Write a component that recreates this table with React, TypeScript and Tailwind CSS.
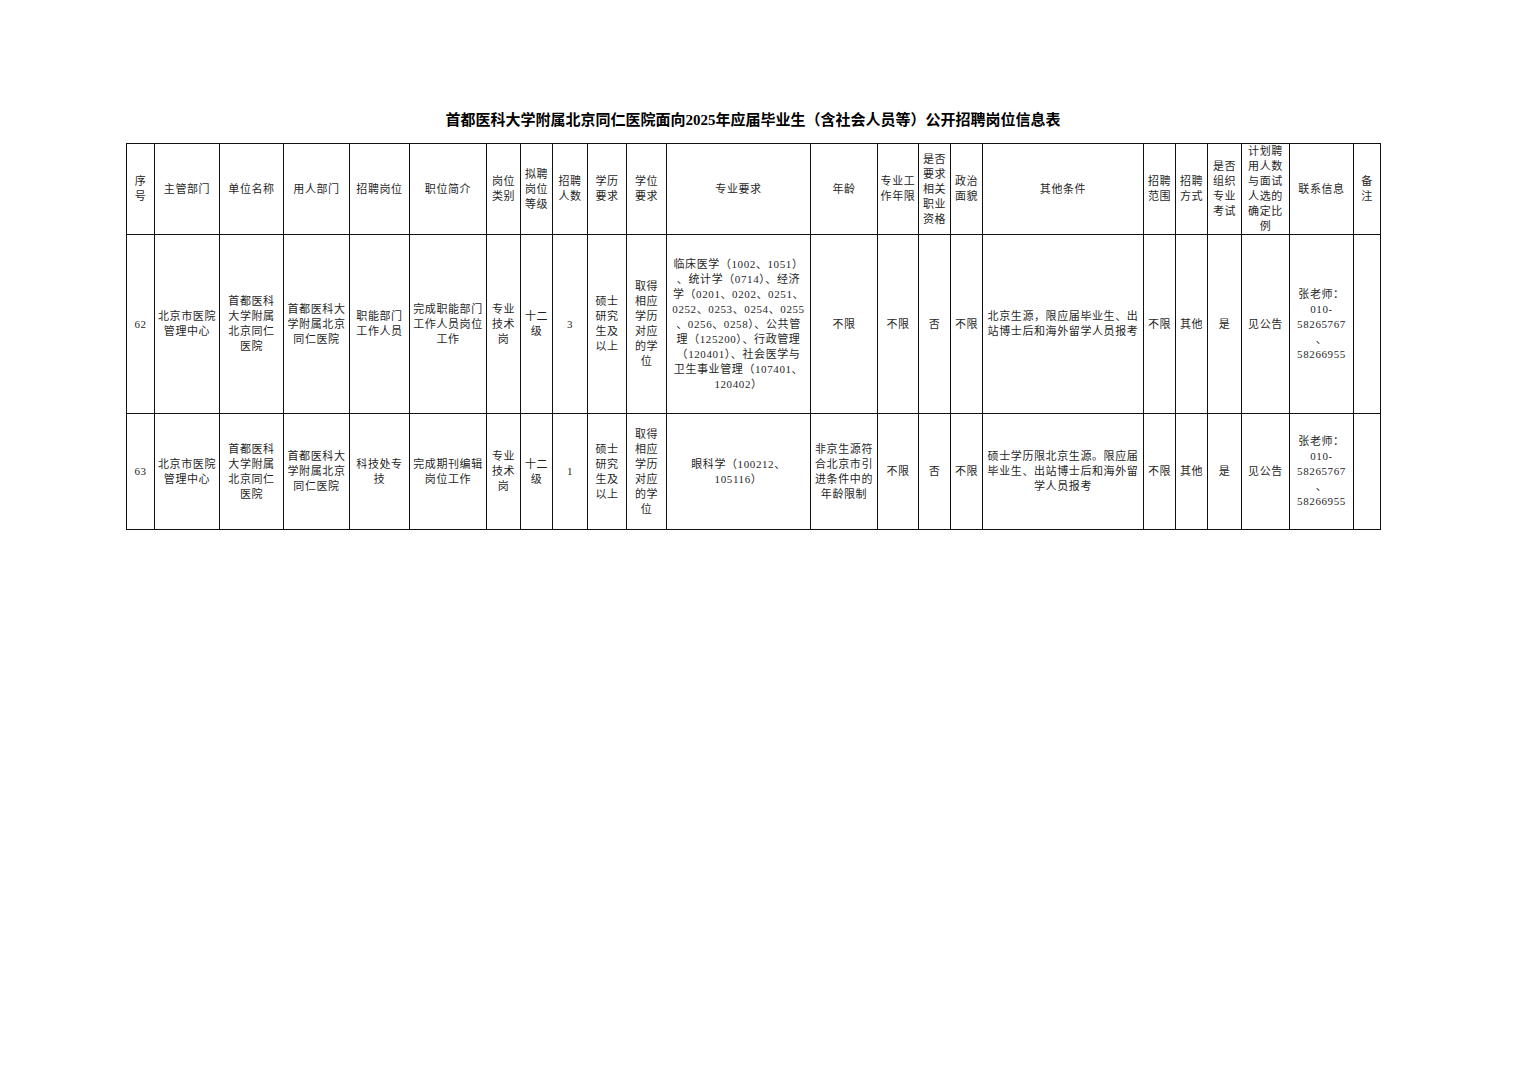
import React from "react";

const widths = [28, 65, 64, 66, 60, 77, 34, 32, 35, 39, 40, 144, 67, 41, 32, 32, 161, 32, 32, 34, 48, 64, 27];

const header: string[][] = [
  ["序", "号"],
  ["主管部门"],
  ["单位名称"],
  ["用人部门"],
  ["招聘岗位"],
  ["职位简介"],
  ["岗位", "类别"],
  ["拟聘", "岗位", "等级"],
  ["招聘", "人数"],
  ["学历", "要求"],
  ["学位", "要求"],
  ["专业要求"],
  ["年龄"],
  ["专业工", "作年限"],
  ["是否", "要求", "相关", "职业", "资格"],
  ["政治", "面貌"],
  ["其他条件"],
  ["招聘", "范围"],
  ["招聘", "方式"],
  ["是否", "组织", "专业", "考试"],
  ["计划聘", "用人数", "与面试", "人选的", "确定比", "例"],
  ["联系信息"],
  ["备", "注"],
];

const contact = ["张老师：", "010-", "58265767", "、", "58266955"];
const unit = ["首都医科", "大学附属", "北京同仁", "医院"];
const dept = ["首都医科大", "学附属北京", "同仁医院"];
const degree = ["取得", "相应", "学历", "对应", "的学", "位"];
const edu = ["硕士", "研究", "生及", "以上"];

const rows: { h: string; cells: string[][] }[] = [
  {
    h: "h-[179px]",
    cells: [
      ["62"],
      ["北京市医院", "管理中心"],
      unit,
      dept,
      ["职能部门", "工作人员"],
      ["完成职能部门", "工作人员岗位", "工作"],
      ["专业", "技术", "岗"],
      ["十二", "级"],
      ["3"],
      edu,
      degree,
      [
        "临床医学（1002、1051）",
        "、统计学（0714）、经济",
        "学（0201、0202、0251、",
        "0252、0253、0254、0255",
        "、0256、0258）、公共管",
        "理（125200）、行政管理",
        "（120401）、社会医学与",
        "卫生事业管理（107401、",
        "120402）",
      ],
      ["不限"],
      ["不限"],
      ["否"],
      ["不限"],
      ["北京生源，限应届毕业生、出", "站博士后和海外留学人员报考"],
      ["不限"],
      ["其他"],
      ["是"],
      ["见公告"],
      contact,
      [],
    ],
  },
  {
    h: "h-[116px]",
    cells: [
      ["63"],
      ["北京市医院", "管理中心"],
      unit,
      dept,
      ["科技处专", "技"],
      ["完成期刊编辑", "岗位工作"],
      ["专业", "技术", "岗"],
      ["十二", "级"],
      ["1"],
      edu,
      degree,
      ["眼科学（100212、", "105116）"],
      ["非京生源符", "合北京市引", "进条件中的", "年龄限制"],
      ["不限"],
      ["否"],
      ["不限"],
      ["硕士学历限北京生源。限应届", "毕业生、出站博士后和海外留", "学人员报考"],
      ["不限"],
      ["其他"],
      ["是"],
      ["见公告"],
      contact,
      [],
    ],
  },
];

function Cell({ lines }: { lines: string[] }) {
  return (
    <td className="border border-[#111] p-0 text-center align-middle">
      {lines.map((l, i) => (
        <div key={i} className="whitespace-nowrap leading-[15px]">
          {l}
        </div>
      ))}
    </td>
  );
}

export default function App() {
  return (
    <div
      className="min-h-[1080px] w-[1528px] bg-white text-[#1f1f1f]"
      style={{ fontFamily: '"Liberation Serif", "Noto Sans CJK SC", serif' }}
    >
      <div className="ml-[126px] w-[1254px] pt-[110px]">
        <h1 className="mb-[13px] text-center text-[15px] font-bold leading-[20px] text-black">
          首都医科大学附属北京同仁医院面向2025年应届毕业生（含社会人员等）公开招聘岗位信息表
        </h1>
        <table className="w-[1254px] table-fixed border-collapse text-[11px] tracking-[0.6px]">
          <colgroup>
            {widths.map((w, i) => (
              <col key={i} style={{ width: w }} />
            ))}
          </colgroup>
          <tbody>
            <tr className="h-[91px]">
              {header.map((c, i) => (
                <Cell key={i} lines={c} />
              ))}
            </tr>
            {rows.map((r, ri) => (
              <tr key={ri} className={r.h}>
                {r.cells.map((c, i) => (
                  <Cell key={i} lines={c} />
                ))}
              </tr>
            ))}
          </tbody>
        </table>
      </div>
    </div>
  );
}
